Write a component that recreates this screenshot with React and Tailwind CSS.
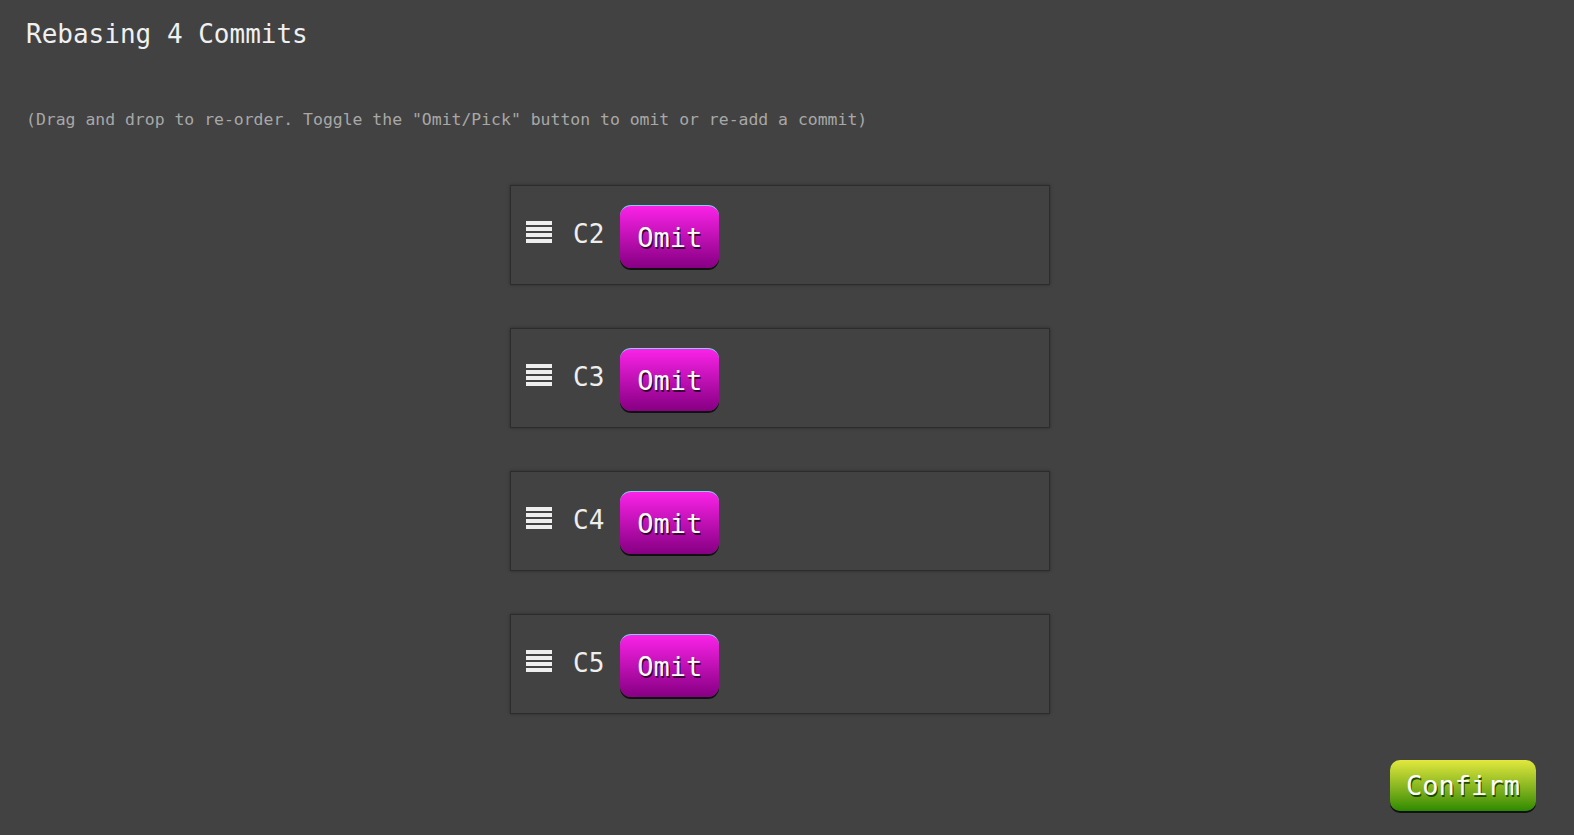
import React from 'react';

const commits = ['C2', 'C3', 'C4', 'C5'];

function Grip() {
  return (
    <div className="flex flex-col gap-[2px] w-[26px]">
      {[0, 1, 2, 3].map((i) => (
        <div key={i} className="h-[4px] bg-[#eeeeee]" />
      ))}
    </div>
  );
}

function CommitRow({ id }) {
  return (
    <div className="w-[540px] h-[100px] border border-[#2c2c2c] shadow-[0_0_3px_rgba(0,0,0,0.35)] flex items-start pl-[15px] pt-[19px]">
      <div className="mt-[16px]">
        <Grip />
      </div>
      <span className="ml-[21px] mt-[16px] text-[26px] leading-none text-[#eeeeee]">{id}</span>
      <button className="ml-[16px] w-[99px] h-[63px] rounded-[11px] border-t border-[#7fd0f0] bg-gradient-to-b from-[#fb22e8] to-[#870083] shadow-[0_2px_0_#111] text-white text-[27px] leading-none [text-shadow:1px_2px_0_#3a0030]">
        Omit
      </button>
    </div>
  );
}

export default function App() {
  return (
    <div
      className="w-[1574px] h-[835px] bg-[#424242] relative overflow-hidden"
      style={{ fontFamily: '"DejaVu Sans Mono", "Liberation Mono", monospace' }}
    >
      <div className="pl-[26px] pt-[18px]">
        <h1 className="text-[26px] leading-[32px] text-[#f0f0f0]">Rebasing 4 Commits</h1>
        <p className="mt-[60px] text-[16.45px] leading-[20px] text-[#a8a8a8]">
          (Drag and drop to re-order. Toggle the "Omit/Pick" button to omit or re-add a commit)
        </p>
      </div>
      <div className="flex flex-col items-center gap-[43px] mt-[55px] pr-[14px]">
        {commits.map((c) => (
          <CommitRow key={c} id={c} />
        ))}
      </div>
      <button className="absolute left-[1390px] top-[760px] w-[146px] h-[51px] rounded-[10px] bg-gradient-to-b from-[#e2e83e] to-[#2a8a00] shadow-[0_2px_0_#111] text-white text-[27px] leading-none [text-shadow:1px_2px_0_#1c4a00]">
        Confirm
      </button>
    </div>
  );
}
